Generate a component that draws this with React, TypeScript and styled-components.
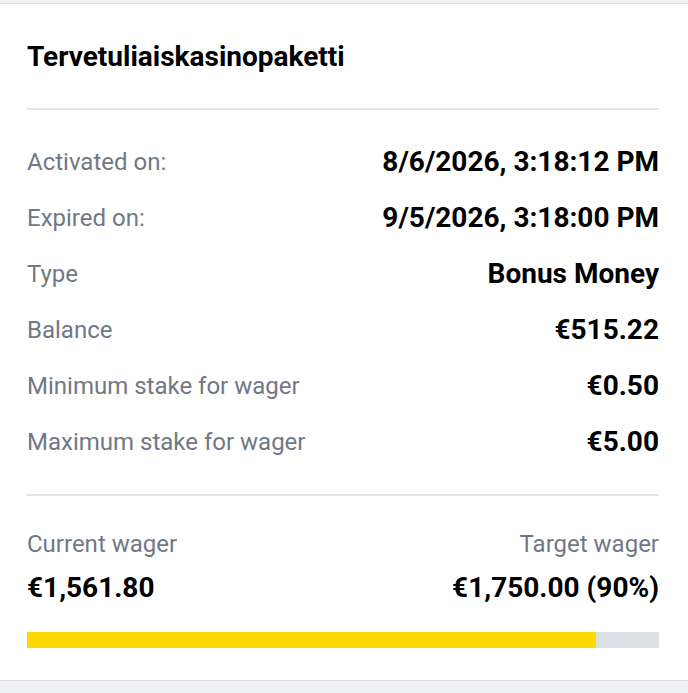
import React from "react";
import styled, { createGlobalStyle } from "styled-components";

const GlobalStyle = createGlobalStyle`
    html, body {
        margin: 0;
        padding: 0;
        background: #f0f1f4;
        font-family: Roboto, "Liberation Sans", Arial, sans-serif;
    }
`;

const Page = styled.div`
    padding-top: 3px;
    padding-bottom: 12px;
`;

const Card = styled.div`
    background: #fff;
    border-top: 1px solid #e2e3e8;
    border-bottom: 1px solid #e0e1e5;
    padding: 37px 29px 32px 27px;
`;

const Title = styled.h2`
    margin: 0;
    font-size: 28px;
    line-height: 32px;
    font-weight: 700;
    color: #000;
`;

const Divider = styled.div<{ $top: number; $bottom: number }>`
    height: 2px;
    background: #e4e5e7;
    margin-top: ${(p) => p.$top}px;
    margin-bottom: ${(p) => p.$bottom}px;
`;

const Row = styled.div`
    display: flex;
    justify-content: space-between;
    align-items: center;
    height: 56px;
`;

const Label = styled.span`
    font-size: 24px;
    line-height: 32px;
    color: #707887;
`;

const Value = styled.span`
    font-size: 28px;
    line-height: 32px;
    font-weight: 700;
    color: #000;
`;

const WagerGrid = styled.div`
    display: grid;
    grid-template-columns: 1fr 1fr;
    row-gap: 12px;
`;

const Cell = styled.div<{ $right?: boolean }>`
    text-align: ${(p) => (p.$right ? "right" : "left")};
`;

const Track = styled.div`
    margin-top: 28px;
    height: 16px;
    background: #dcdfe4;
`;

const Fill = styled.div`
    height: 100%;
    background: #fcd700;
`;

const details = [
    { label: "Activated on:", value: "8/6/2026, 3:18:12 PM" },
    { label: "Expired on:", value: "9/5/2026, 3:18:00 PM" },
    { label: "Type", value: "Bonus Money" },
    { label: "Balance", value: "€515.22" },
    { label: "Minimum stake for wager", value: "€0.50" },
    { label: "Maximum stake for wager", value: "€5.00" },
];

const wager = { current: "€1,561.80", target: "€1,750.00", percent: 90 };

const App: React.FunctionComponent = () => {
    return (
        <>
            <GlobalStyle />
            <Page>
                <Card>
                    <Title>Tervetuliaiskasinopaketti</Title>
                    <Divider $top={35} $bottom={24} />
                    {details.map((item) => (
                        <Row key={item.label}>
                            <Label>{item.label}</Label>
                            <Value>{item.value}</Value>
                        </Row>
                    ))}
                    <Divider $top={24} $bottom={32} />
                    <WagerGrid>
                        <Cell>
                            <Label>Current wager</Label>
                        </Cell>
                        <Cell $right>
                            <Label>Target wager</Label>
                        </Cell>
                        <Cell>
                            <Value>{wager.current}</Value>
                        </Cell>
                        <Cell $right>
                            <Value>
                                {wager.target} ({wager.percent}%)
                            </Value>
                        </Cell>
                    </WagerGrid>
                    <Track>
                        <Fill style={{ width: `${wager.percent}%` }} />
                    </Track>
                </Card>
            </Page>
        </>
    );
};

export default App;
